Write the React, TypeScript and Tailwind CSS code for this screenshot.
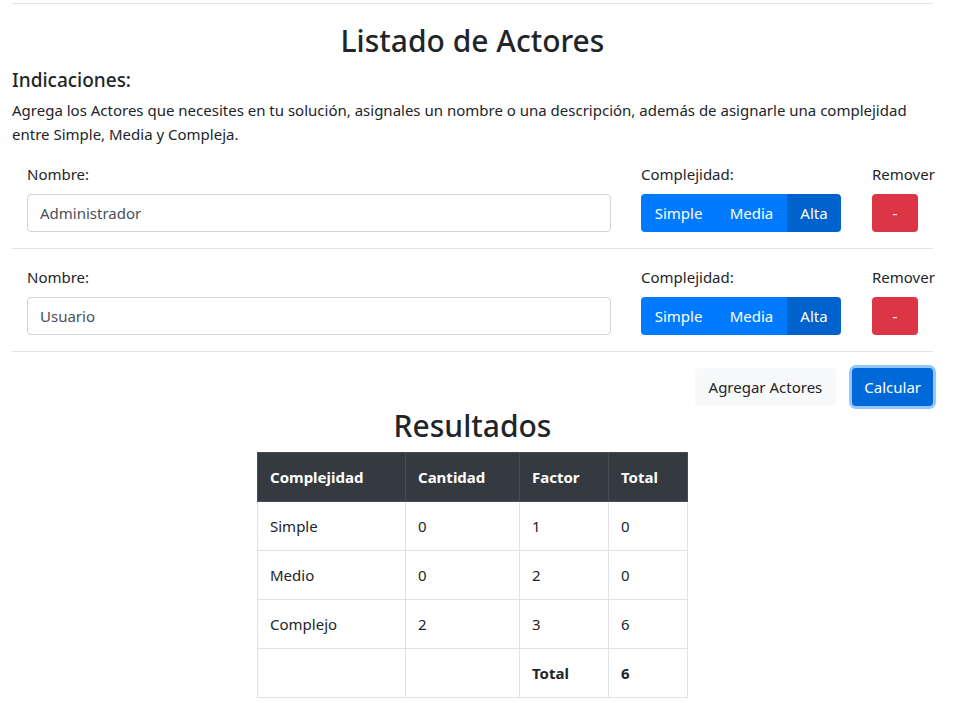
import React from "react";

const font = { fontFamily: '"Noto Sans", "Open Sans", sans-serif' };

function ActorRow({ name }: { name: string }) {
  return (
    <div className="flex pt-4 pb-4 border-b border-[#e5e5e5]">
      <div className="ml-[15px] w-[584px] shrink-0 flex flex-col">
        <label className="text-[15px] leading-[24px] mb-2 text-[#212529]">Nombre:</label>
        <input
          readOnly
          value={name}
          className="h-[38px] w-full border border-[#ced4da] rounded-[4px] px-3 text-[15px] text-[#495057] outline-none bg-white"
        />
      </div>
      <div className="ml-[30px] w-[200px] shrink-0 flex flex-col">
        <label className="text-[15px] leading-[24px] mb-2 text-[#212529]">Complejidad:</label>
        <div className="flex h-[38px] rounded-[4px] overflow-hidden text-white text-[15px]">
          <div className="w-[75px] bg-[#007bff] flex items-center justify-center">Simple</div>
          <div className="w-[71px] bg-[#007bff] flex items-center justify-center">Media</div>
          <div className="w-[54px] bg-[#0062cc] flex items-center justify-center">Alta</div>
        </div>
      </div>
      <div className="ml-[31px] w-[46px] shrink-0 flex flex-col">
        <label className="text-[15px] leading-[24px] mb-2 text-[#212529] whitespace-nowrap">Remover</label>
        <div className="w-[46px] h-[38px] rounded-[4px] bg-[#dc3545] text-white flex items-center justify-center text-[15px]">
          -
        </div>
      </div>
    </div>
  );
}

const rows = [
  ["Simple", "0", "1", "0"],
  ["Medio", "0", "2", "0"],
  ["Complejo", "2", "3", "6"],
];

export default function App() {
  return (
    <div className="bg-white min-h-[706px] text-[#212529]" style={font}>
      <div className="ml-[12px] w-[921px] pt-[3px]">
        <div className="border-t border-[#e5e5e5]" />
        <h2 className="text-center text-[30px] leading-[38px] font-medium mt-[18px] mb-[8px]">Listado de Actores</h2>
        <h5 className="text-[19px] leading-[24px] font-medium mb-[6px]">Indicaciones:</h5>
        <p className="text-[15px] leading-[24px]">
          Agrega los Actores que necesites en tu solución, asignales un nombre o una descripción, además de asignarle una complejidad entre Simple, Media y Compleja.
        </p>
        <ActorRow name="Administrador" />
        <ActorRow name="Usuario" />
        <div className="flex justify-end pt-4 gap-4">
          <div className="h-[38px] px-[14px] rounded-[4px] bg-[#f8f9fa] flex items-center text-[15px] text-[#212529]">Agregar Actores</div>
          <div className="h-[38px] px-3 rounded-[4px] bg-[#0069d9] flex items-center text-[15px] text-white shadow-[0_0_0_3px_rgba(38,143,255,0.5)]">Calcular</div>
        </div>
        <h2 className="text-center text-[30px] leading-[38px] font-medium mt-[1px] mb-[7px]">Resultados</h2>
        <div className="flex justify-center">
          <table className="border-collapse text-[15px] leading-[24px]">
            <thead>
              <tr className="bg-[#343a40] text-white">
                <th className="w-[148px] text-left font-bold border border-[#454d55] px-3 py-3">Complejidad</th>
                <th className="w-[114px] text-left font-bold border border-[#454d55] px-3 py-3">Cantidad</th>
                <th className="w-[89px] text-left font-bold border border-[#454d55] px-3 py-3">Factor</th>
                <th className="w-[79px] text-left font-bold border border-[#454d55] px-3 py-3">Total</th>
              </tr>
            </thead>
            <tbody>
              {rows.map((r) => (
                <tr key={r[0]}>
                  {r.map((c, i) => (
                    <td key={i} className="border border-[#dee2e6] px-3 py-3">{c}</td>
                  ))}
                </tr>
              ))}
              <tr>
                <td className="border border-[#dee2e6] px-3 py-3"></td>
                <td className="border border-[#dee2e6] px-3 py-3"></td>
                <td className="border border-[#dee2e6] px-3 py-3 font-bold">Total</td>
                <td className="border border-[#dee2e6] px-3 py-3 font-bold">6</td>
              </tr>
            </tbody>
          </table>
        </div>
      </div>
    </div>
  );
}
